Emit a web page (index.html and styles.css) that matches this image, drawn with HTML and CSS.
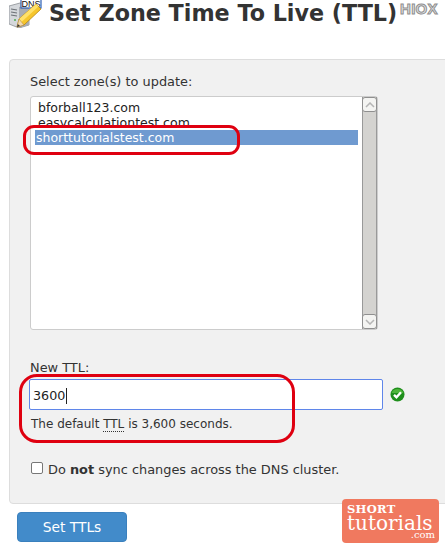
FILE: index.html
```html
<!DOCTYPE html>
<html>
<head>
  <title>Set Zone Time To Live (TTL)</title>
  <link rel="stylesheet" href="styles.css">
</head>
<body>
  <header class="page-head">
    <svg class="page-icon" width="33" height="28" viewBox="0 0 33 28">
      <path d="M0 6 L11 3 L20 5 L20 25 L10 28 L0 24 Z" fill="#d5d8dc" stroke="#8b8f94" stroke-width="0.8"/>
      <path d="M10 7 L10 28 L20 25 L20 5 Z" fill="#a9adb3"/>
      <path d="M2 9 L8 10 M2 12 L8 13 M2 15 L8 16" stroke="#6d7278" stroke-width="1.2"/>
      <circle cx="6" cy="20" r="1" fill="#4caf50"/>
      <rect x="12" y="-3" width="20" height="11" fill="#fff" stroke="#2f5fb3" stroke-width="1.2"/>
      <text x="22" y="7" class="icon-text">DNS</text>
      <path d="M8 27 L10 19 L27 4 L32 9 L15 25 Z" fill="#f6c62c" stroke="#b78610" stroke-width="0.8"/>
      <path d="M10 19 L27 4 L29.500 6.500 L12.500 22 Z" fill="#ffe16a"/>
      <path d="M8 27 L10 19 L15 25 Z" fill="#f3d9ae" stroke="#a98348" stroke-width="0.5"/>
      <path d="M8 27 L8.800 24 L11 26 Z" fill="#333"/>
    </svg>
    <h1>Set Zone Time To Live (TTL)</h1>
    <span class="hiox">HIOX</span>
  </header>

  <div class="panel">
    <p class="field-label">Select zone(s) to update:</p>
    <div class="zone-list">
      <div class="zone-options">
        <div class="zone-option">bforball123.com</div>
        <div class="zone-option zone-clipped">easycalculationtest.com</div>
        <div class="zone-option zone-selected">shorttutorialstest.com</div>
      </div>
      <div class="scrollbar">
        <div class="scroll-btn">
          <svg width="10" height="6" viewBox="0 0 10 6"><path d="M1 5 L5 1 L9 5" fill="none" stroke="#b5b5b5" stroke-width="1.5"/></svg>
        </div>
        <div class="scroll-track"></div>
        <div class="scroll-btn">
          <svg width="10" height="6" viewBox="0 0 10 6"><path d="M1 1 L5 5 L9 1" fill="none" stroke="#b5b5b5" stroke-width="1.5"/></svg>
        </div>
      </div>
    </div>

    <p class="field-label ttl-label">New <abbr>TTL</abbr>:</p>
    <div class="ttl-row">
      <div class="ttl-input"><span class="ttl-value">3600</span></div>
      <svg class="ok-icon" width="15" height="15" viewBox="0 0 15 15">
        <circle cx="7.500" cy="7.500" r="7" fill="#1f8f1c"/>
        <path d="M1.500 6 A6.500 6.500 0 0 1 13.500 6 Z" fill="#4db53a"/>
        <path d="M4 7.800 L6.500 10.300 L11 5.300" fill="none" stroke="#fff" stroke-width="2.400"/>
      </svg>
    </div>
    <p class="help-text">The default <abbr>TTL</abbr> is 3,600 seconds.</p>
    <label class="sync-row">
      <span class="checkbox"></span>
      <span>Do <b>not</b> sync changes across the DNS cluster.</span>
    </label>
  </div>

  <div class="btn-primary">Set TTLs</div>

  <!-- annotations on top of the screenshot -->
  <div class="mark mark-zone"></div>
  <div class="mark mark-ttl"></div>

  <div class="watermark">
    <span class="wm-short">SHORT</span>
    <span class="wm-name">tutorials</span>
    <span class="wm-com">.com</span>
  </div>
</body>
</html>
```

FILE: styles.css
```css
* {
  margin: 0;
  padding: 0;
  box-sizing: border-box;
}

body {
  position: relative;
  height: 548px;
  overflow: hidden;
  background-color: #fff;
  color: #333;
  font-family: "DejaVu Sans", sans-serif;
  font-size: 12.900px;
  line-height: 18px;
}

.page-head {
  display: flex;
  align-items: flex-start;
  height: 59px;
  padding-left: 9px;
}

.page-icon {
  flex: none;
  margin-right: 7px;
}

.icon-text {
  font-family: "Liberation Sans", sans-serif;
  font-size: 9px;
  text-anchor: middle;
  fill: #111;
}

h1 {
  margin-top: 1px;
  font-size: 22.250px;
  line-height: 24px;
  white-space: nowrap;
  color: #333;
}

.hiox {
  position: absolute;
  left: 400px;
  top: 1px;
  font-family: "Liberation Sans", sans-serif;
  font-weight: bold;
  font-size: 15px;
  line-height: 15px;
  letter-spacing: 0.3px;
  color: #e4e4e4;
  -webkit-text-stroke: 1px #8f8f8f;
}

.panel {
  width: 445px;
  margin-left: 9px;
  padding: 13px 20px 24px;
  background-color: #f1f1f1;
  border: 1px solid #ddd;
  border-radius: 4px;
}

.field-label {
  height: 18px;
}

abbr {
  border-bottom: 1px dotted #333;
}

.zone-list {
  display: flex;
  width: 348px;
  height: 234px;
  margin-top: 5px;
  background-color: #fff;
  border: 1px solid #ccc;
  border-radius: 3px;
}

.zone-options {
  flex: 1;
  padding: 3px 4px 0;
  color: #222;
  font-size: 12.500px;
}

.zone-option {
  height: 15px;
  padding-left: 3px;
  line-height: 15px;
}

.zone-clipped {
  height: 12px;
  margin-bottom: 3px;
  overflow: hidden;
}

.zone-selected {
  padding-left: 1px;
  background-color: #6f9ad0;
  color: #fff;
}

.scrollbar {
  display: flex;
  flex-direction: column;
  flex: none;
  width: 15px;
  background-color: #d4d3d0;
  border-left: 1px solid #999;
  border-right: 1px solid #999;
}

.scroll-btn {
  display: flex;
  align-items: center;
  justify-content: center;
  height: 15px;
  margin: 0 -1px;
  background-color: #f4f4f2;
  border: 1px solid #8f8f8f;
  border-radius: 3px;
}

.scroll-track {
  flex: 1;
}

.ttl-label {
  margin-top: 29px;
}

.ttl-row {
  display: flex;
  align-items: center;
  margin-top: 2px;
  margin-left: -1px;
}

.ttl-input {
  width: 354px;
  height: 31px;
  padding-left: 3px;
  line-height: 29px;
  background-color: #fff;
  border: 1px solid #5f86ea;
  border-radius: 2px;
  color: #222;
  font-size: 12.700px;
}

.ttl-value {
  display: inline-block;
  height: 16px;
  line-height: 16px;
  padding-right: 1px;
  vertical-align: middle;
  border-right: 1px solid #222;
}

.ok-icon {
  flex: none;
  margin-left: 7px;
}

.help-text {
  margin-top: 5px;
  margin-left: 1px;
  font-size: 12px;
}

.sync-row {
  display: flex;
  align-items: center;
  margin-top: 28px;
  margin-left: 1px;
}

.checkbox {
  flex: none;
  width: 12px;
  height: 12px;
  margin-right: 5px;
  margin-top: -4px;
  background-color: #fff;
  border: 1px solid #777;
  border-radius: 2px;
}

.btn-primary {
  width: 110px;
  height: 30px;
  margin-top: 8px;
  margin-left: 17px;
  text-align: center;
  font-size: 13.800px;
  line-height: 29px;
  color: #fff;
  background-color: #428bca;
  border: 1px solid #3a80bd;
  border-radius: 4px;
}

.mark {
  position: absolute;
  border: 3px solid #df0010;
  border-radius: 11px;
}

.mark-zone {
  left: 23px;
  top: 125px;
  width: 217px;
  height: 30px;
}

.mark-ttl {
  left: 19px;
  top: 374px;
  width: 276px;
  height: 69px;
  border-radius: 18px;
}

.watermark {
  position: absolute;
  left: 342px;
  top: 499px;
  display: flex;
  flex-direction: column;
  width: 97px;
  height: 44px;
  padding: 5px 4px 0 5px;
  background-color: #f0795f;
  border-radius: 4px;
  color: #fff;
  font-family: "DejaVu Serif", serif;
}

.wm-short {
  font-size: 11.500px;
  font-weight: bold;
  line-height: 11px;
  letter-spacing: 0.3px;
}

.wm-name {
  font-size: 20px;
  line-height: 16px;
  white-space: nowrap;
}

.wm-com {
  margin-top: -1px;
  font-size: 10px;
  line-height: 9px;
  text-align: right;
}
```
